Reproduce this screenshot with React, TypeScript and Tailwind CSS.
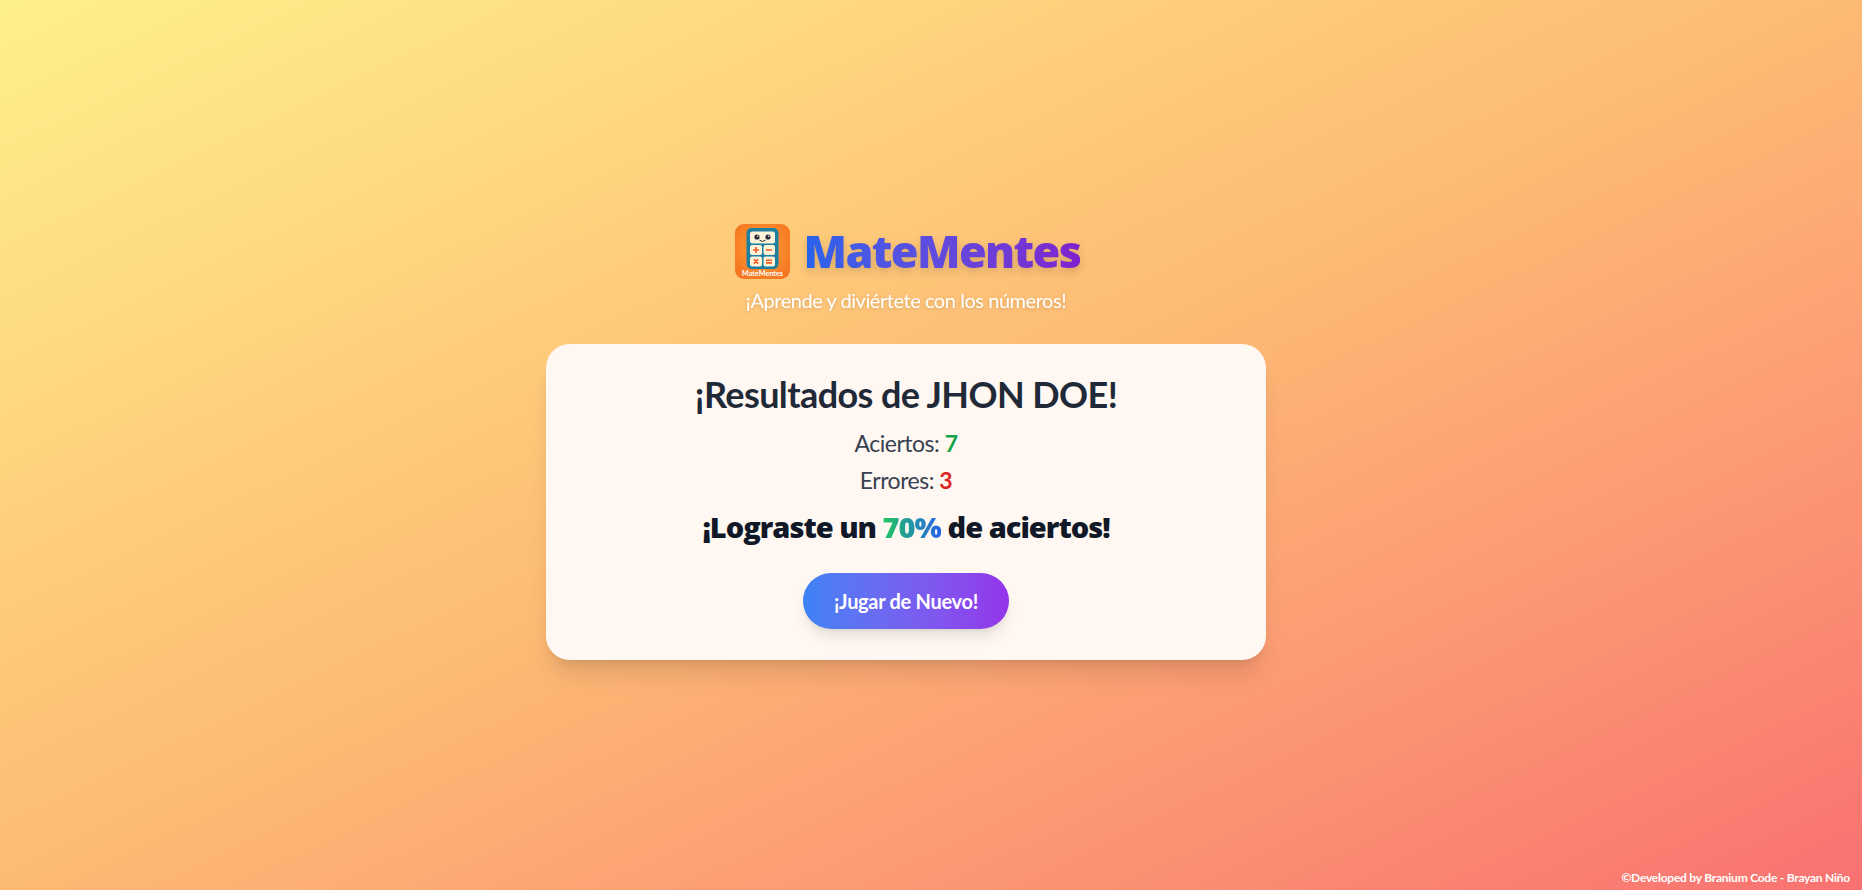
const font = { fontFamily: 'Lato, "Open Sans", sans-serif' };
const heavy = { fontFamily: '"Open Sans", Lato, sans-serif' };

function Logo() {
  return (
    <svg width="55" height="55" viewBox="0 0 55 55" className="shrink-0">
      <defs>
        <radialGradient id="bg" cx="50%" cy="45%" r="70%">
          <stop offset="0%" stopColor="#fda63e" />
          <stop offset="100%" stopColor="#f56f1c" />
        </radialGradient>
      </defs>
      <rect width="55" height="55" rx="9" fill="url(#bg)" />
      <rect x="11.5" y="4" width="32" height="41" rx="5" fill="#1e7fa0" />
      <rect x="15" y="7.5" width="25" height="12" rx="2.5" fill="#fdf3d8" />
      <circle cx="22" cy="13" r="2.6" fill="#2b2b3a" />
      <circle cx="33" cy="13" r="2.6" fill="#2b2b3a" />
      <circle cx="22.8" cy="12.2" r="0.8" fill="#fff" />
      <circle cx="33.8" cy="12.2" r="0.8" fill="#fff" />
      <path d="M24.5 16.2 q3 2.5 6 0" fill="none" stroke="#2b2b3a" strokeWidth="1" />
      <rect x="15" y="21" width="12" height="10" rx="2" fill="#fdf3d8" />
      <rect x="28.5" y="21" width="11.5" height="10" rx="2" fill="#fdf3d8" />
      <rect x="15" y="32.5" width="12" height="10" rx="2" fill="#fdf3d8" />
      <rect x="28.5" y="32.5" width="11.5" height="10" rx="2" fill="#fdf3d8" />
      <path d="M21 23v6M18 26h6M31 26h6M18.8 35.2l4.4 4.4M23.2 35.2l-4.4 4.4M31 36.2h6M31 38.9h6" stroke="#ef5a24" strokeWidth="1.6" fill="none" />
      <text x="27.5" y="52" textAnchor="middle" fontSize="7.2" fontWeight="700" fill="#fff" style={font}>MateMentes</text>
    </svg>
  );
}

export default function App() {
  return (
    <div
      className="relative min-h-screen flex flex-col items-center justify-center pr-[50px] pb-[7px] bg-gradient-to-br from-[#fef08a] via-[#fdba74] to-[#f87171]"
      style={font}
    >
      <div className="flex flex-col items-center mb-[30px]">
        <div className="flex items-center gap-[14px] ml-[3px]">
          <Logo />
          <h1
            className="text-[45px] leading-[48px] font-extrabold tracking-[-1.65px] bg-gradient-to-r from-[#2563eb] to-[#7e22ce] bg-clip-text text-transparent drop-shadow-lg"
            style={heavy}
          >
            MateMentes
          </h1>
        </div>
        <p className="mt-[7px] text-xl tracking-[-0.45px] text-white drop-shadow">¡Aprende y diviértete con los números!</p>
      </div>
      <div className="w-[720px] rounded-3xl bg-[#fff8f2] px-8 pt-[31px] pb-[31px] text-center shadow-xl flex flex-col items-center">
        <h2 className="-mt-px text-4xl font-bold tracking-[-0.6px] text-[#1f2937] mb-[13px]">¡Resultados de JHON DOE!</h2>
        <p className="text-[23px] leading-8 tracking-[-0.5px] text-[#374151] mb-[5px]">
          Aciertos: <span className="font-bold text-[#16a34a]">7</span>
        </p>
        <p className="text-[23px] leading-8 tracking-[-0.5px] text-[#374151] mb-[13px]">
          Errores: <span className="font-bold text-[#dc2626]">3</span>
        </p>
        <p className="text-[29px] leading-9 font-extrabold tracking-[-1px] text-[#111827] mb-[28px]" style={heavy}>
          ¡Lograste un{" "}
          <span className="bg-linear-to-r/srgb from-[#22c55e] to-[#2563eb] bg-clip-text text-transparent">70%</span> de aciertos!
        </p>
        <button className="h-14 w-[206px] rounded-full bg-gradient-to-r from-[#3b82f6] to-[#9333ea] text-xl font-bold tracking-[-0.3px] text-white shadow-lg">
          ¡Jugar de Nuevo!
        </button>
      </div>
      <div className="absolute bottom-1 right-[12px] text-xs font-bold tracking-[-0.24px] text-white">©Developed by Branium Code - Brayan Niño</div>
    </div>
  );
}
